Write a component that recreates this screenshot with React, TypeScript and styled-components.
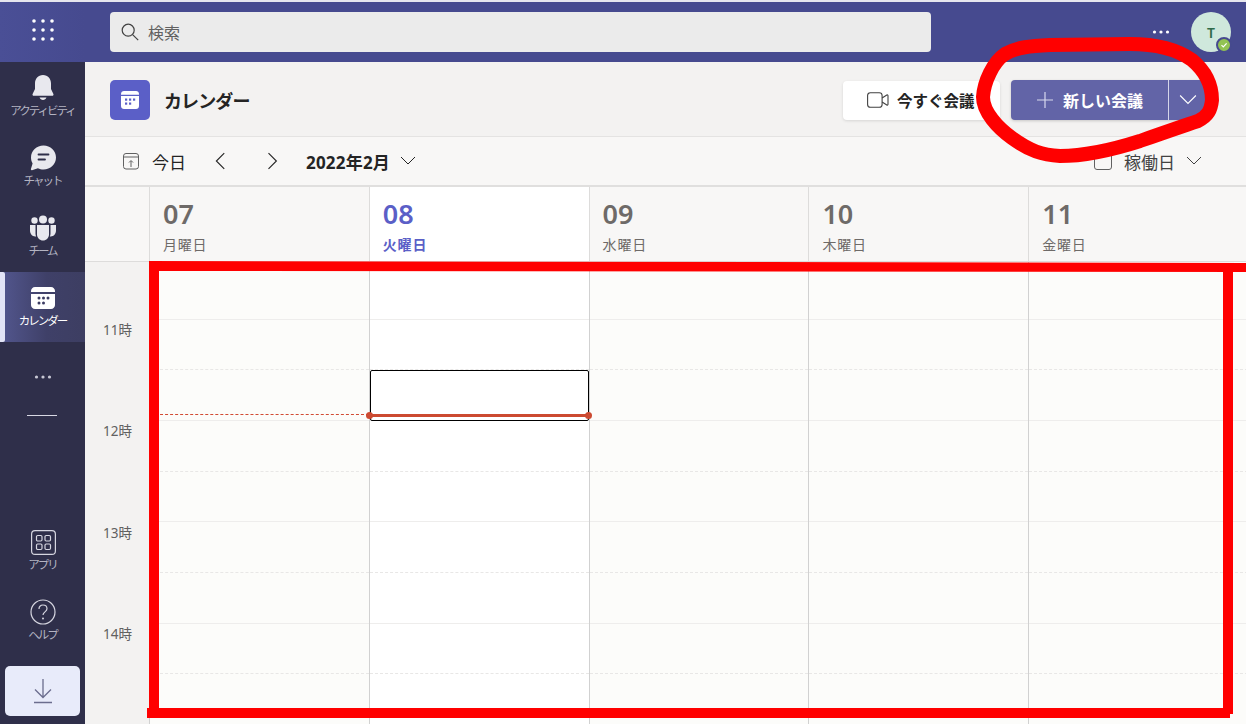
import React from "react";
import styled, { createGlobalStyle } from "styled-components";

const FONT = `"Noto Sans", "Noto Sans CJK JP", sans-serif`;

const Global = createGlobalStyle`
  html, body { margin: 0; padding: 0; height: 100%; overflow: hidden; background: #f3f2f1; }
  * { box-sizing: border-box; }
  body { font-family: ${FONT}; }
`;

const Page = styled.div`
  position: relative;
  width: 1246px;
  height: 724px;
  overflow: hidden;
  display: grid;
  grid-template-columns: 85px 1fr;
  grid-template-rows: 62px 1fr;
`;

/* top bar */
const Launcher = styled.div`
  border-top: 2px solid #e6e6ee;
  padding-bottom: 4px;
  background: linear-gradient(90deg, #4a4f96, #464a8f);
  display: flex;
  align-items: center;
  justify-content: center;
`;
const TopBar = styled.header`
  border-top: 2px solid #e6e6ee;
  background: #464a8f;
  display: flex;
  align-items: center;
  padding: 0 15px 0 25px;
`;
const Search = styled.div`
  width: 821px;
  height: 40px;
  background: #ebebeb;
  border-radius: 4px;
  display: flex;
  align-items: center;
  gap: 9px;
  padding: 0 0 1px 11px;
  color: #616161;
  font-size: 16px;
`;
const TopRight = styled.div`
  margin-left: auto;
  display: flex;
  align-items: center;
  gap: 21px;
`;
const Avatar = styled.div`
  position: relative;
  width: 40px;
  height: 40px;
  border-radius: 50%;
  background: #cfe8dc;
  color: #2f6b4a;
  font-size: 14px;
  font-weight: 600;
  display: flex;
  align-items: center;
  justify-content: center;
`;
const Presence = styled.span`
  position: absolute;
  right: -1px;
  bottom: -1px;
  width: 16px;
  height: 16px;
  border-radius: 50%;
  background: #92c353;
  border: 2px solid #464a8f;
  display: flex;
  align-items: center;
  justify-content: center;
`;

/* rail */
const Rail = styled.nav`
  background: #2f2f4a;
  display: flex;
  flex-direction: column;
  height: 662px;
`;
const RailItem = styled.div<{ $active?: boolean }>`
  position: relative;
  height: 70px;
  padding-top: 12px;
  display: flex;
  flex-direction: column;
  align-items: center;
  color: ${(p) => (p.$active ? "#ffffff" : "#b4b4c2")};
  background: ${(p) =>
    p.$active ? "linear-gradient(90deg, #53578f 0%, #3f4068 55%, #3d3e62 100%)" : "transparent"};
  svg { display: block; }
`;
const ActiveMark = styled.span`
  position: absolute;
  left: 0;
  top: 0;
  bottom: 0;
  width: 5px;
  border-radius: 0 2px 2px 0;
  background: #e2e4f6;
`;
const RailLabel = styled.span`
  margin-top: 1px;
  font-size: 11.5px;
  line-height: 16px;
  letter-spacing: -2px;
  white-space: nowrap;
`;
const RailMore = styled.div`
  height: 70px;
  display: flex;
  align-items: center;
  justify-content: center;
`;
const RailDivider = styled.div`
  width: 30px;
  height: 1px;
  margin: 3px 0 0 27px;
  background: #d8d8e4;
`;
const RailSpacer = styled.div`
  flex: 1;
`;
const DownloadButton = styled.div`
  width: 75px;
  height: 50px;
  margin: 10px 0 8px 5px;
  border-radius: 5px;
  background: #e8ebfa;
  display: flex;
  align-items: center;
  justify-content: center;
`;

/* main */
const Main = styled.main`
  display: flex;
  flex-direction: column;
  min-width: 0;
  height: 662px;
`;
const TitleBar = styled.div`
  height: 75px;
  flex: none;
  background: #f3f2f1;
  border-bottom: 1px solid #e4e3e2;
  display: flex;
  align-items: center;
  padding: 2px 40px 0 25px;
`;
const TitleIcon = styled.div`
  width: 40px;
  height: 40px;
  border-radius: 5px;
  background: #5b5fc7;
  display: flex;
  align-items: center;
  justify-content: center;
`;
const Title = styled.h1`
  margin: 0 0 0 14px;
  font-size: 18px;
  font-weight: 700;
  letter-spacing: -0.9px;
  color: #242424;
`;
const TitleActions = styled.div`
  margin-left: auto;
  display: flex;
  align-items: center;
  gap: 11px;
`;
const MeetNow = styled.div`
  width: 157px;
  height: 39px;
  background: #fff;
  border-radius: 4px;
  box-shadow: 0 1px 3px rgba(0, 0, 0, 0.12);
  display: flex;
  align-items: center;
  gap: 8px;
  padding-left: 24px;
  font-size: 15.5px;
  font-weight: 600;
  color: #242424;
  white-space: nowrap;
`;
const NewMeeting = styled.div`
  width: 195px;
  height: 40px;
  background: #6264a7;
  border-radius: 4px;
  box-shadow: 0 1px 3px rgba(0, 0, 0, 0.18);
  display: flex;
  color: #fff;
  font-size: 16px;
  font-weight: 700;
`;
const NewMeetingMain = styled.div`
  width: 158px;
  display: flex;
  align-items: center;
  gap: 9px;
  padding-left: 25px;
  border-right: 1px solid #d5d6ea;
  white-space: nowrap;
`;
const NewMeetingCaret = styled.div`
  flex: 1;
  display: flex;
  align-items: center;
  justify-content: center;
`;

const Toolbar = styled.div`
  height: 50px;
  flex: none;
  background: #f8f7f6;
  border-bottom: 2px solid #e0dfde;
  display: flex;
  align-items: center;
  padding: 0 44px 0 38px;
  color: #242424;
  font-size: 17px;
`;
const TodayLabel = styled.span`
  margin-left: 13px;
`;
const NavChevrons = styled.div`
  display: flex;
  gap: 33px;
  margin: 0 24px 0 27px;
`;
const MonthLabel = styled.span`
  font-weight: 700;
  font-size: 17px;
  letter-spacing: 0.2px;
  margin-right: 10px;
`;
const ViewPicker = styled.div`
  margin-left: auto;
  display: flex;
  align-items: center;
  color: #424242;
  gap: 11px;
`;
const WeekLabel = styled.span`
  margin-left: 1px;
`;

const HeaderRow = styled.div`
  height: 75px;
  flex: none;
  display: grid;
  grid-template-columns: 64px repeat(5, 219.8px);
  background: #f8f7f6;
  border-bottom: 1px solid #dddcdb;
`;
const HeaderCorner = styled.div``;
const DayHead = styled.div<{ $today?: boolean }>`
  border-left: 1px solid #dddcdb;
  padding: 10px 0 0 13px;
  background: ${(p) => (p.$today ? "#ffffff" : "transparent")};
  color: ${(p) => (p.$today ? "#5b5fc7" : "#6e6a68")};
`;
const DayNumber = styled.div`
  font-size: 27px;
  line-height: 34px;
  font-weight: 600;
`;
const DayName = styled.div<{ $today?: boolean }>`
  margin-top: 5px;
  font-size: 14px;
  line-height: 18px;
  letter-spacing: 0.8px;
  font-weight: ${(p) => (p.$today ? 600 : 400)};
`;

const Body = styled.div`
  flex: 1;
  min-height: 0;
  display: grid;
  grid-template-columns: 64px repeat(5, 219.8px);
  overflow: hidden;
`;
const Gutter = styled.div`
  background: #f3f2f1;
  padding-top: 56px;
`;
const HourLabel = styled.div`
  height: 101.33px;
  padding-left: 18px;
  font-size: 13.5px;
  line-height: 24px;
  color: #616161;
`;
const DayColumn = styled.div<{ $today?: boolean }>`
  position: relative;
  z-index: ${(p) => (p.$today ? 1 : 0)};
  border-left: 1px solid #d1d1d1;
  background: ${(p) => (p.$today ? "#ffffff" : "#fcfcfa")};
  padding-top: 7px;
`;
const Slot = styled.div<{ $solid: boolean }>`
  height: 50.67px;
  border-bottom: 1px ${(p) => (p.$solid ? "solid #eeedec" : "dashed #e8e7e6")};
`;
const Selection = styled.div`
  position: absolute;
  left: 0;
  right: 0;
  top: 108px;
  height: 51px;
  border: 1px solid #000;
  border-radius: 2px;
  background: #fff;
`;
const NowDashed = styled.div`
  position: absolute;
  left: 0;
  right: 0;
  top: 152px;
  border-top: 1px dashed #d14b33;
`;
const NowLine = styled.div`
  position: absolute;
  left: 0;
  right: 0;
  top: 152px;
  height: 3px;
  background: #cc4a31;
  &::before, &::after {
    content: "";
    position: absolute;
    top: -2px;
    width: 7px;
    height: 7px;
    border-radius: 50%;
    background: #cc4a31;
  }
  &::before { left: -4px; }
  &::after { right: -3px; }
`;
const Markup = styled.svg`
  position: absolute;
  inset: 0;
  z-index: 2;
  pointer-events: none;
`;

const GridDots = () => (
  <svg width="22" height="22" viewBox="0 0 22 22" fill="#fff">
    {[2, 11, 20].map((y) => [2, 11, 20].map((x) => <circle key={`${x}-${y}`} cx={x} cy={y} r="1.8" />))}
  </svg>
);
const SearchIcon = () => (
  <svg width="18" height="18" viewBox="0 0 18 18" fill="none" stroke="#424242" strokeWidth="1.2">
    <circle cx="7.2" cy="7.2" r="6" />
    <path d="M11.6 11.6l5.6 5.6" />
  </svg>
);
const Bell = () => (
  <svg width="28" height="28" viewBox="0 0 28 28" fill="#e8e8ee">
    <path d="M14 1c-5 0-8 3.600-8 8.600v5.400L3.600 20c-.4.900.2 1.800 1.200 1.800h18.400c1 0 1.600-.9 1.200-1.800L22 15V9.600C22 4.600 19 1 14 1z" />
    <path d="M10.500 23.500h7c-.6 1.500-1.900 2.500-3.500 2.500s-2.900-1-3.500-2.500z" />
  </svg>
);
const Chat = () => (
  <svg width="28" height="28" viewBox="0 0 28 28">
    <path fill="#e8e8ee" d="M14.500 1.500C21.400 1.500 27 6.900 27 13.500S21.400 25.500 14.500 25.500c-2 0-3.900-.5-5.600-1.300L3 26.200c-.7.200-1.300-.4-1.100-1.100l1.700-5.600C2.600 17.700 2 15.700 2 13.500 2 6.900 7.600 1.500 14.500 1.500z" />
    <path d="M9.500 10.500h10M9.500 15.500h6.500" stroke="#2f2f4a" strokeWidth="1.800" strokeLinecap="round" />
  </svg>
);
const Team = () => (
  <svg width="28" height="28" viewBox="0 0 28 28" fill="#e8e8ee">
    <circle cx="14" cy="5.500" r="4" />
    <circle cx="5.500" cy="6.500" r="3.200" />
    <circle cx="22.500" cy="6.500" r="3.200" />
    <path d="M1 11h5.500v8.500c0 1 .2 2 .6 2.900C3.600 23 1 20 1 16.500z" />
    <path d="M27 11h-5.500v8.500c0 1-.2 2-.6 2.900C24.400 23 27 20 27 16.500z" />
    <path d="M8 11h12v9.500c0 3.300-2.700 6-6 6s-6-2.700-6-6z" />
  </svg>
);
const Calendar = () => (
  <svg width="28" height="28" viewBox="0 0 28 28">
    <path fill="#fff" d="M6 3h16c2.200 0 4 1.800 4 4v1H2V7c0-2.200 1.800-4 4-4z" />
    <path fill="#fff" d="M2 10h24v11c0 2.200-1.800 4-4 4H6c-2.200 0-4-1.800-4-4z" />
    <g fill="#3b3c62">
      <circle cx="10" cy="14" r="1.500" /><circle cx="14.500" cy="14" r="1.500" /><circle cx="19" cy="14" r="1.500" />
      <circle cx="10" cy="19" r="1.500" /><circle cx="14.500" cy="19" r="1.500" />
    </g>
  </svg>
);
const TitleCalendar = () => (
  <svg width="18" height="18" viewBox="0 0 18 18">
    <path fill="#fff" d="M3 0h12c1.700 0 3 1.300 3 3v.8H0V3c0-1.700 1.300-3 3-3z" />
    <path fill="#fff" d="M0 5h18v10c0 1.700-1.300 3-3 3H3c-1.700 0-3-1.300-3-3z" />
    <g fill="#5b5fc7">
      <rect x="4" y="7.500" width="2.200" height="2.200" /><rect x="8" y="7.500" width="2.200" height="2.200" /><rect x="12" y="7.500" width="2.200" height="2.200" />
      <rect x="4" y="11.500" width="2.200" height="2.200" /><rect x="8" y="11.500" width="2.200" height="2.200" />
    </g>
  </svg>
);
const Apps = () => (
  <svg width="28" height="28" viewBox="0 0 28 28" fill="none" stroke="#d6d6e0" strokeWidth="1.200">
    <rect x="2.600" y="2.600" width="23.800" height="23.800" rx="3.500" />
    <rect x="7.500" y="7.500" width="5.500" height="5.500" rx="1.200" />
    <rect x="16" y="7.500" width="5.500" height="5.500" rx="1.200" />
    <rect x="7.500" y="16" width="5.500" height="5.500" rx="1.200" />
    <rect x="16" y="16" width="5.500" height="5.500" rx="1.200" />
  </svg>
);
const Help = () => (
  <svg width="28" height="28" viewBox="0 0 28 28" fill="none" stroke="#d6d6e0" strokeWidth="1.200">
    <circle cx="14" cy="14" r="12" />
    <path d="M10 11c0-2.500 1.800-4 4-4s4 1.500 4 3.700c0 3-4 3.300-4 6.300" />
    <circle cx="14" cy="20.500" r="1" fill="#d6d6e0" stroke="none" />
  </svg>
);
const Download = () => (
  <svg width="20" height="26" viewBox="0 0 20 26" fill="none" stroke="#6b6d8e" strokeWidth="1.300">
    <path d="M10 1v18M2 11.500l8 8 8-8M1 24.500h18" />
  </svg>
);
const TodayIcon = () => (
  <svg width="16" height="17" viewBox="0 0 16 17" fill="none" stroke="#616161" strokeWidth="1">
    <rect x="0.500" y="0.500" width="15" height="15.500" rx="2.500" />
    <path d="M.5 4h15M8 14V8M6 9.500 8 7.500l2 2" />
  </svg>
);
const Chevron = ({ dir, size = 14 }: { dir: "left" | "right" | "down"; size?: number }) => {
  const d = { left: "M10 1 3 8l7 7", right: "M4 1l7 7-7 7", down: "M1 4l7 7 7-7" }[dir];
  return (
    <svg width={size} height={size} viewBox="0 0 16 16" fill="none" stroke="currentColor" strokeWidth="1">
      <path d={d} />
    </svg>
  );
};
const Video = () => (
  <svg width="22" height="16" viewBox="0 0 22 16" fill="none" stroke="#424242" strokeWidth="1.100">
    <rect x="0.600" y="0.800" width="14.500" height="14.400" rx="2.800" />
    <path d="M15.100 6l4.700-3c.5-.3 1.200 0 1.200.7v8.600c0 .7-.7 1-1.200.7l-4.700-3" />
  </svg>
);
const Plus = () => (
  <svg width="18" height="18" viewBox="0 0 18 18" stroke="#d8d9ee" strokeWidth="1.200">
    <path d="M9 1v16M1 9h16" />
  </svg>
);
const Check = () => (
  <svg width="8" height="8" viewBox="0 0 8 8" fill="none" stroke="#fff" strokeWidth="1.200">
    <path d="M1.500 4.200 3.300 6 6.600 2.300" />
  </svg>
);
const WeekIcon = () => (
  <svg width="18" height="18" viewBox="0 0 18 18" fill="none" stroke="#616161" strokeWidth="1">
    <rect x="0.500" y="0.500" width="17" height="17" rx="2.500" />
  </svg>
);
const MoreDots = ({ color, r = 1.600 }: { color: string; r?: number }) => (
  <svg width="18" height="4" viewBox="0 0 18 4" fill={color}>
    <circle cx="2.500" cy="2" r={r} /><circle cx="9" cy="2" r={r} /><circle cx="15.500" cy="2" r={r} />
  </svg>
);

const days = [
  { n: "07", d: "月曜日" },
  { n: "08", d: "火曜日", today: true },
  { n: "09", d: "水曜日" },
  { n: "10", d: "木曜日" },
  { n: "11", d: "金曜日" },
];
const slots = Array.from({ length: 9 }, (_, i) => i % 2 === 0);

export default function App() {
  return (
    <Page>
      <Global />
      <Launcher><GridDots /></Launcher>
      <TopBar>
        <Search><SearchIcon />検索</Search>
        <TopRight>
          <MoreDots color="#ffffff" />
          <Avatar>T<Presence><Check /></Presence></Avatar>
        </TopRight>
      </TopBar>

      <Rail>
        <RailItem><Bell /><RailLabel>アクティビティ</RailLabel></RailItem>
        <RailItem><Chat /><RailLabel>チャット</RailLabel></RailItem>
        <RailItem><Team /><RailLabel>チーム</RailLabel></RailItem>
        <RailItem $active><ActiveMark /><Calendar /><RailLabel>カレンダー</RailLabel></RailItem>
        <RailMore><MoreDots color="#c8c8d4" /></RailMore>
        <RailDivider />
        <RailSpacer />
        <RailItem><Apps /><RailLabel>アプリ</RailLabel></RailItem>
        <RailItem><Help /><RailLabel>ヘルプ</RailLabel></RailItem>
        <DownloadButton><Download /></DownloadButton>
      </Rail>

      <Main>
        <TitleBar>
          <TitleIcon><TitleCalendar /></TitleIcon>
          <Title>カレンダー</Title>
          <TitleActions>
            <MeetNow><Video />今すぐ会議</MeetNow>
            <NewMeeting>
              <NewMeetingMain><Plus />新しい会議</NewMeetingMain>
              <NewMeetingCaret><Chevron dir="down" size={18} /></NewMeetingCaret>
            </NewMeeting>
          </TitleActions>
        </TitleBar>
        <Toolbar>
          <TodayIcon />
          <TodayLabel>今日</TodayLabel>
          <NavChevrons>
            <Chevron dir="left" size={18} />
            <Chevron dir="right" size={18} />
          </NavChevrons>
          <MonthLabel>2022年2月</MonthLabel>
          <Chevron dir="down" size={16} />
          <ViewPicker>
            <WeekIcon /><WeekLabel>稼働日</WeekLabel><Chevron dir="down" size={16} />
          </ViewPicker>
        </Toolbar>
        <HeaderRow>
          <HeaderCorner />
          {days.map((day) => (
            <DayHead key={day.n} $today={day.today}>
              <DayNumber>{day.n}</DayNumber>
              <DayName $today={day.today}>{day.d}</DayName>
            </DayHead>
          ))}
        </HeaderRow>
        <Body>
          <Gutter>
            {["11時", "12時", "13時", "14時"].map((h) => <HourLabel key={h}>{h}</HourLabel>)}
          </Gutter>
          {days.map((day, i) => (
            <DayColumn key={day.n} $today={day.today}>
              {slots.map((solid, s) => <Slot key={s} $solid={solid} />)}
              {i === 0 && <NowDashed />}
              {day.today && <Selection />}
              {day.today && <NowLine />}
            </DayColumn>
          ))}
        </Body>
      </Main>

      <Markup width="1246" height="724" viewBox="0 0 1246 724">
        <g fill="#ff0000">
          <polygon points="149,261 1246,263 1246,272 149,271" />
          <rect x="149" y="261" width="10" height="453" />
          <rect x="147" y="708" width="1083" height="10" />
          <rect x="1223" y="268" width="10" height="446" />
        </g>
        <path
          fill="none"
          stroke="#ff0000"
          strokeWidth="14"
          strokeLinejoin="round"
          d="M983 97 C984 82 993 62 1005 54 C1018 47 1030 46 1050 45 L1130 44 C1160 44 1178 50 1192 60 C1204 70 1212 84 1212 100 C1211 110 1208 116 1198 121 C1180 127 1160 134 1140 141 C1115 149 1085 156 1060 156 C1042 155 1030 151 1012 138 C998 128 983 112 983 97 Z"
        />
      </Markup>
    </Page>
  );
}
